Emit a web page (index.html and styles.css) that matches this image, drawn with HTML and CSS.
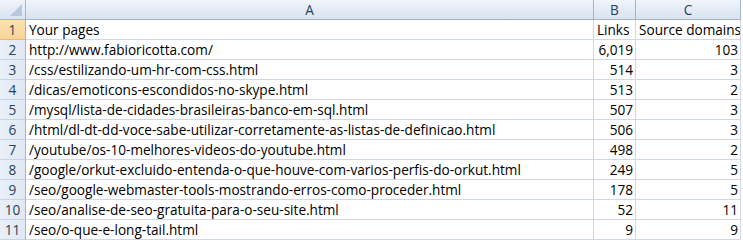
FILE: index.html
```html
<!DOCTYPE html>
<html>
<head>
<meta charset="utf-8">
<link rel="stylesheet" href="styles.css">
</head>
<body>
<table class="sheet">
  <colgroup>
    <col class="c-rh"><col class="c-a"><col class="c-b"><col class="c-c">
  </colgroup>
  <thead>
    <tr class="hdr">
      <th class="corner"><span class="tri"></span></th>
      <th>A</th><th>B</th><th>C</th>
    </tr>
  </thead>
  <tbody>
    <tr><th class="rh sel">1</th><td>Your pages</td><td>Links</td><td>Source domains</td></tr>
    <tr><th class="rh">2</th><td>http://www.fabioricotta.com/</td><td class="n">6,019</td><td class="n">103</td></tr>
    <tr><th class="rh">3</th><td>/css/estilizando-um-hr-com-css.html</td><td class="n">514</td><td class="n">3</td></tr>
    <tr><th class="rh">4</th><td>/dicas/emoticons-escondidos-no-skype.html</td><td class="n">513</td><td class="n">2</td></tr>
    <tr><th class="rh">5</th><td>/mysql/lista-de-cidades-brasileiras-banco-em-sql.html</td><td class="n">507</td><td class="n">3</td></tr>
    <tr><th class="rh">6</th><td>/html/dl-dt-dd-voce-sabe-utilizar-corretamente-as-listas-de-definicao.html</td><td class="n">506</td><td class="n">3</td></tr>
    <tr><th class="rh">7</th><td>/youtube/os-10-melhores-videos-do-youtube.html</td><td class="n">498</td><td class="n">2</td></tr>
    <tr><th class="rh">8</th><td>/google/orkut-excluido-entenda-o-que-houve-com-varios-perfis-do-orkut.html</td><td class="n">249</td><td class="n">5</td></tr>
    <tr><th class="rh">9</th><td>/seo/google-webmaster-tools-mostrando-erros-como-proceder.html</td><td class="n">178</td><td class="n">5</td></tr>
    <tr><th class="rh">10</th><td>/seo/analise-de-seo-gratuita-para-o-seu-site.html</td><td class="n">52</td><td class="n">11</td></tr>
    <tr><th class="rh">11</th><td>/seo/o-que-e-long-tail.html</td><td class="n">9</td><td class="n">9</td></tr>
  </tbody>
</table>
</body>
</html>
```
FILE: styles.css
```css
html, body {
  margin: 0;
  padding: 0;
  background: #ffffff;
}
.sheet {
  border-collapse: separate;
  border-spacing: 0;
  table-layout: fixed;
  width: 741px;
  font-family: "Open Sans", "Liberation Sans", sans-serif;
  font-size: 13.6px;
  color: #000;
}
.c-rh { width: 26px; }
.c-a { width: 568px; }
.c-b { width: 42px; }
.c-c { width: 105px; }
.sheet th, .sheet td {
  box-sizing: border-box;
  height: 20px;
  padding: 0 2px 0 3px;
  border-right: 1px solid #d0d7e5;
  border-bottom: 1px solid #d0d7e5;
  white-space: nowrap;
  overflow: hidden;
  line-height: 19px;
  font-weight: normal;
}
.hdr th {
  background: linear-gradient(#f1f5fb, #e4ebf5 50%, #dae3ef);
  border-right: 1px solid #9eb6ce;
  border-bottom: 1px solid #9eb6ce;
  text-align: center;
  color: #27415f;
  padding: 0;
}
.corner {
  position: relative;
}
.tri {
  position: absolute;
  right: 3px;
  bottom: 3px;
  width: 0;
  height: 0;
  border-left: 12px solid transparent;
  border-bottom: 12px solid #b8c8dc;
}
.rh {
  background: linear-gradient(90deg, #eaf0f8, #e1e8f3);
  border-right: 1px solid #9eb6ce !important;
  border-bottom: 1px solid #c5d3e3 !important;
  text-align: center;
  color: #27415f;
  padding: 0 !important;
}
.rh.sel {
  background: linear-gradient(#fbe1ae, #f8d49a);
  border-bottom-color: #e9b870 !important;
}
.n {
  text-align: right;
}
```
